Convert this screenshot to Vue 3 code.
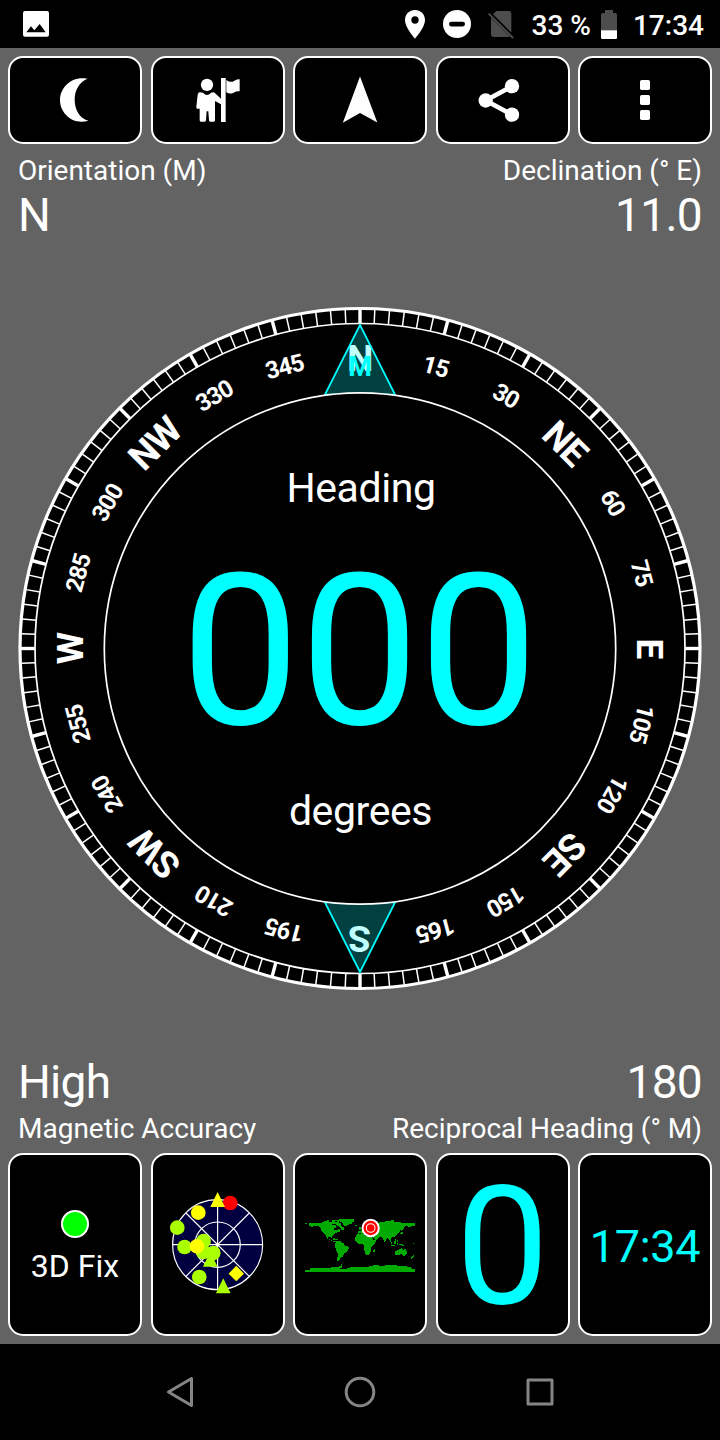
<script setup>

import { ref, computed } from 'vue'

const heading = ref(0)
const clock = ref('17:34')
const battery = ref(33)

const paddedHeading = computed(() => String(heading.value).padStart(3, '0'))
const reciprocal = computed(() => (heading.value + 180) % 360)

const names = { 0: 'N', 45: 'NE', 90: 'E', 135: 'SE', 180: 'S', 225: 'SW', 270: 'W', 315: 'NW' }

// one label each 15 degrees, one tick each 2.5 degrees
const labels = Array.from({ length: 24 }, (_, i) => {
    const angle = i * 15
    return { angle, text: names[angle] || String(angle), big: angle in names }
})

const ticks = Array.from({ length: 144 }, (_, i) => ({ angle: i * 2.5, major: i % 6 === 0 }))

const satellites = [
    { shape: 'circle', x: 241, y: 159, color: '#ff0000' },
    { shape: 'triangle', x: 203, y: 149, color: '#ffff00' },
    { shape: 'circle', x: 145, y: 188, color: '#ffff00' },
    { shape: 'circle', x: 82, y: 233, color: '#aaff00' },
    { shape: 'triangle', x: 181, y: 328, color: '#aaff00' },
    { shape: 'circle', x: 161, y: 273, color: '#aaff00' },
    { shape: 'circle', x: 104, y: 291, color: '#aaff00' },
    { shape: 'circle', x: 160, y: 306, color: '#aaff00' },
    { shape: 'circle', x: 190, y: 309, color: '#aaff00' },
    { shape: 'circle', x: 141, y: 289, color: '#ffff00' },
    { shape: 'circle', x: 148, y: 381, color: '#aaff00' },
    { shape: 'diamond', x: 259, y: 371, color: '#ffff00' },
    { shape: 'triangle', x: 220, y: 408, color: '#aaff00' }
]

</script>

<template>
    <div class="screen">
        <div class="status-bar">
            <svg class="photo" viewBox="69 33 78 78" width="26" height="26">
                <path fill="#fff" fill-rule="evenodd" d="M75 33H141Q147 33 147 39V104Q147 110 141 110H75Q69 110 69 104V39Q69 33 75 33ZM79 97H137L119 72L103 91L93 79Z" />
            </svg>
            <svg class="pin" viewBox="135 29 60 86" width="20" height="28.67">
                <path fill="#fff" fill-rule="evenodd" d="M165 29C148 29 135 42 135 59C135 82 165 115 165 115S195 82 195 59C195 42 182 29 165 29ZM165 48A11 11 0 1 1 165 70A11 11 0 1 1 165 48Z" />
            </svg>
            <svg class="dnd" viewBox="0 0 28 28" width="28" height="28">
                <circle cx="14" cy="14" r="14" fill="#fff" />
                <rect x="6" y="11.8" width="16" height="4.6" rx="2.3" fill="#000" />
            </svg>
            <svg class="sim" viewBox="384 33 78 84" width="26" height="28">
                <path fill="#4d4d4d" d="M409 33H447Q454 33 454 40V98L399 43ZM393 53V103Q393 111 401 111H446L449 109Z" />
                <path stroke="#4d4d4d" stroke-width="6" d="M386 41L459 114" />
            </svg>
            <span class="percent">{{ battery }} %</span>
            <svg class="battery" viewBox="723 27 48 87" width="16" height="29">
                <path fill="#4d4d4d" d="M735 27H759V36H766Q771 36 771 41V88H723V41Q723 36 728 36H735Z" />
                <path fill="#fff" d="M723 88H771V110Q771 114 767 114H727Q723 114 723 110Z" />
            </svg>
            <span class="time">{{ clock }}</span>
        </div>

        <div class="main">
            <div class="row toolbar">
                <button class="cell">
                    <svg viewBox="159 234 132 132" width="44" height="44">
                        <path fill="#fff" d="M262 236C215 227 180 262 180 300C180 340 218 376 265 362C237 354 224 327 224 299C224 271 237 247 262 236Z" />
                    </svg>
                </button>
                <button class="cell">
                    <svg viewBox="588 234 132 132" width="44" height="44">
                        <g fill="#fff">
                            <circle cx="621" cy="254.500" r="18.500" />
                            <path d="M600 277L609 278Q621 292 633 278L642 277L663 296V313L645 303V361Q645 365 641 365H631Q627 365 627 361L625 334H620L618 361Q618 365 614 365H603Q599 365 599 361V326H592Q588 326 589 321L593 284Q594 277 600 277Z" />
                            <path d="M663 234H677V366H663Z" />
                            <path d="M679 240Q692 250 703 242Q711 236 719 238V274Q709 273 701 278Q690 284 679 277Z" />
                        </g>
                    </svg>
                </button>
                <button class="cell">
                    <svg viewBox="338 78 44 44" width="44" height="44">
                        <path fill="#fff" d="M360 76.500L377.300 122.500L360 113L342.800 122.800Z" />
                    </svg>
                </button>
                <button class="cell">
                    <svg viewBox="361 234 132 132" width="44" height="44">
                        <path stroke="#fff" stroke-width="14" fill="none" d="M454 259L375 301.500L454 344" />
                        <circle cx="375" cy="301.500" r="21.500" fill="#fff" />
                        <circle cx="454" cy="258.500" r="21.500" fill="#fff" />
                        <circle cx="454" cy="344" r="21.500" fill="#fff" />
                    </svg>
                </button>
                <button class="cell">
                    <svg viewBox="789 234 132 132" width="44" height="44">
                        <g fill="#fff">
                            <rect x="840" y="240" width="30" height="30" rx="5" />
                            <rect x="840" y="285" width="30" height="30" rx="5" />
                            <rect x="840" y="330" width="30" height="30" rx="5" />
                        </g>
                    </svg>
                </button>
            </div>

            <div class="info top">
                <div class="labels"><span>Orientation (M)</span><span>Declination (° E)</span></div>
                <div class="values"><span>N</span><span>11.0</span></div>
            </div>

            <svg class="compass" viewBox="-360 -406.5 720 812" width="720" height="812">
                <circle r="340" fill="#000" stroke="#fff" stroke-width="3.200" />
                <line v-for="t in ticks" :key="t.angle" x1="0" x2="0" y1="-339" y2="-325"
                    stroke="#fff" :stroke-width="t.major ? 3.4 : 1.5" :transform="`rotate(${t.angle})`" />
                <circle r="325" fill="none" stroke="#fff" stroke-width="1.700" />
                <g :transform="`rotate(${-heading})`">
                    <text v-for="l in labels" :key="l.angle" :class="l.big ? 'point' : 'number'"
                        :y="l.big ? -277.2 : -283.500" :transform="`rotate(${l.angle})`">{{ l.text }}</text>
                </g>
                <g class="pointer">
                    <path d="M0 -323.500L35 -254H-35Z" />
                    <path d="M0 323.500L35 254H-35Z" />
                </g>
                <circle r="255.700" fill="#000" stroke="#fff" stroke-width="1.700" />
                <text class="magnetic" y="-272.500">M</text>
                <text class="caption" x="1" y="-146.500">Heading</text>
                <text class="degrees" x="-0.5" y="75.500">{{ paddedHeading }}</text>
                <text class="caption" x="0.5" y="176">degrees</text>
            </svg>

            <div class="info bottom">
                <div class="values"><span>High</span><span>{{ reciprocal }}</span></div>
                <div class="labels"><span>Magnetic Accuracy</span><span>Reciprocal Heading (° M)</span></div>
            </div>

            <div class="row panels">
                <div class="cell fix">
                    <div class="led"></div>
                    <span>3D Fix</span>
                </div>
                <div class="cell">
                    <svg viewBox="54.2 114 300 342" width="100" height="114">
                        <g stroke="#fff" stroke-width="3.500" fill="none">
                            <circle cx="203" cy="284" r="135" fill="#000040" />
                            <circle cx="203" cy="284" r="68" />
                            <path d="M68 284H338M203 149V419M108 189L298 379M298 189L108 379" />
                        </g>
                        <g v-for="(s, i) in satellites" :key="i" :fill="s.color" :transform="`translate(${s.x} ${s.y})`">
                            <circle v-if="s.shape === 'circle'" r="22" />
                            <path v-else-if="s.shape === 'triangle'" d="M0 -23L22 22H-22Z" />
                            <path v-else d="M0 -24L23 0L0 23L-23 0Z" />
                        </g>
                    </svg>
                </div>
                <div class="cell">
                    <svg viewBox="42 45 336 180" width="112" height="60">
                        <g fill="#00aa00" shape-rendering="crispEdges">
                            <path d="M45 70H52V73H45Z M57 69H95V67H105V70H125V75H138V82L131 86V90H142L148 87L151 94L140 98L130 105L126 112V116L122 111H114L112 116L120 118L128 124L138 124V127L130 125L118 119L108 108L96 96L92 84L86 79H70V82H62V78H57Z" />
                            <path d="M102 64H110V61H118V66H126V60H134V66H140V62H147V68H153V78L162 83V89H154L150 81L142 77L136 71H122L112 68H102Z" />
                            <path d="M133 61H146V58H192V65H186V71L178 73L168 79H163L158 69L150 64H133Z" />
                            <path d="M128 114H134V117H144V121H138V119H128Z" />
                            <path d="M140 123H152L163 132V136L177 140V146L171 155L164 159L158 170L151 173L147 184H142L143 160L135 142V132Z" />
                            <path d="M201 103L222 101L226 108H246L250 120L259 122L252 134L244 142V152L236 165H228L223 150L221 134L204 131L196 122V112Z" />
                            <path d="M250 149L256 145L254 156H250Z M207 81H211L215 90H206Z M195 75H202V79H195Z" />
                            <path d="M203 101V93H211L217 86L216 79L225 63L236 61L244 70H268V66H286V63H304V61H312V66H334V69H375V78H364V82H355V77L342 80L341 88L334 94L331 91L328 98L320 106L314 112L309 111L304 114L302 124L297 117L292 113L284 127L276 112L268 112L258 120L248 112L246 104H236L228 98L218 101L210 100Z" />
                            <path d="M334 96H338V102H331V98H334Z M314 116H318V123H314Z M299 119L306 128V133L299 124Z M311 123H317V132H311Z M320 128H325V134H320Z M304 134H315V137H304Z M320 121H324V125H320Z M328 131H338L345 139H336V136L328 134Z" />
                            <path d="M316 153L326 149L334 145L341 149L345 144L351 157L349 165L343 168L334 163L316 165Z M369 165H372V170L365 177H362V174Z M368 128H371V131H368Z" />
                            <path d="M45 209H60V205H86V203H122V201H146V198H152V193H156V204H150V207H168L178 203L190 200H236V197H250V195H268V199H284V195H320V197H350V200H364V204H366V208H375V216H45Z" />
                        </g>
                        <circle cx="242" cy="84" r="27.500" fill="#fff" />
                        <circle cx="242" cy="84" r="18" fill="#fff" stroke="#f00" stroke-width="7" />
                        <circle cx="242" cy="84" r="11.500" fill="#f00" />
                    </svg>
                </div>
                <div class="cell big">{{ heading }}</div>
                <div class="cell clock">{{ clock }}</div>
            </div>
        </div>

        <div class="nav-bar">
            <svg viewBox="-18 -18 36 36" width="36" height="36">
                <path d="M-11.500 0L11.500 -13.500V13.500Z" />
            </svg>
            <svg viewBox="-18 -18 36 36" width="36" height="36">
                <circle r="13.800" />
            </svg>
            <svg viewBox="-18 -18 36 36" width="36" height="36">
                <rect x="-12" y="-12" width="24" height="24" />
            </svg>
        </div>
    </div>
</template>

<style>
body {
    margin: 0;
    background: #000;
}
</style>

<style scoped>
.screen {
    width: 720px;
    height: 1440px;
    display: flex;
    flex-direction: column;
    background: #000;
    color: #fff;
    font-family: Roboto, "Liberation Sans", sans-serif;
    overflow: hidden;
}

svg {
    display: block;
    flex: none;
    overflow: visible;
}

.status-bar {
    height: 48px;
    display: flex;
    align-items: center;
    box-sizing: border-box;
    padding: 0 16px 0 23px;
    font-size: 28px;
    font-weight: 500;
    white-space: nowrap;
}

.pin {
    margin-left: auto;
}

.dnd {
    margin-left: 18px;
}

.sim {
    margin: 2px 0 0 17px;
}

.percent {
    margin-left: 18px;
    padding-top: 2px;
}

.battery {
    margin: 0 16px 0 10px;
}

.time {
    padding-top: 2px;
}

.main {
    height: 1296px;
    background: #636363;
}

.row {
    display: grid;
    grid-template-columns: repeat(5, 1fr);
    gap: 8.5px;
    padding: 8px 8px 0;
}

.cell {
    display: flex;
    align-items: center;
    justify-content: center;
    box-sizing: border-box;
    min-width: 0;
    margin: 0;
    padding: 0;
    border: 2px solid #fff;
    border-radius: 15px;
    background: #000;
    white-space: nowrap;
}

.toolbar .cell {
    height: 88px;
}

.panels .cell {
    height: 183px;
}

.info {
    padding: 0 18px;
}

.info.top {
    padding-top: 10px;
}

.labels,
.values {
    display: flex;
    justify-content: space-between;
}

.labels {
    font-size: 28px;
    line-height: 33px;
}

.values {
    font-size: 46px;
    line-height: 54px;
    letter-spacing: -0.7px;
}

.top .values {
    margin-top: 1px;
}

.bottom .values {
    margin: 1px 0 3px;
}

.compass text {
    fill: #fff;
    text-anchor: middle;
}

.compass .point {
    font-size: 37px;
    font-weight: 700;
    letter-spacing: -0.8px;
}

.compass .number {
    font-size: 24px;
    font-weight: 700;
    letter-spacing: -1px;
}

.compass .magnetic {
    fill: #00ffff;
    font-size: 27px;
    font-weight: 700;
}

.compass .caption {
    font-size: 41px;
    letter-spacing: -0.4px;
}

.compass .degrees {
    fill: #00ffff;
    font-size: 212px;
}

.pointer path {
    fill: rgba(0, 255, 255, 0.25);
    stroke: #00ffff;
    stroke-width: 1.7;
}

.fix {
    flex-direction: column;
    padding-top: 4px;
    font-size: 32px;
    line-height: 36px;
}

.led {
    width: 24px;
    height: 24px;
    margin-bottom: 10px;
    border: 2px solid #fff;
    border-radius: 50%;
    background: #00ff00;
}

.big,
.clock {
    color: #00ffff;
}

.big {
    padding-top: 4px;
    font-size: 166px;
    line-height: 179px;
}

.clock {
    padding-top: 4px;
    font-size: 45px;
    letter-spacing: -0.3px;
}

.nav-bar {
    height: 96px;
    display: flex;
    align-items: center;
    justify-content: center;
    gap: 144px;
}

.nav-bar svg {
    fill: none;
    stroke: #858585;
    stroke-width: 3;
    stroke-linejoin: round;
}
</style>
